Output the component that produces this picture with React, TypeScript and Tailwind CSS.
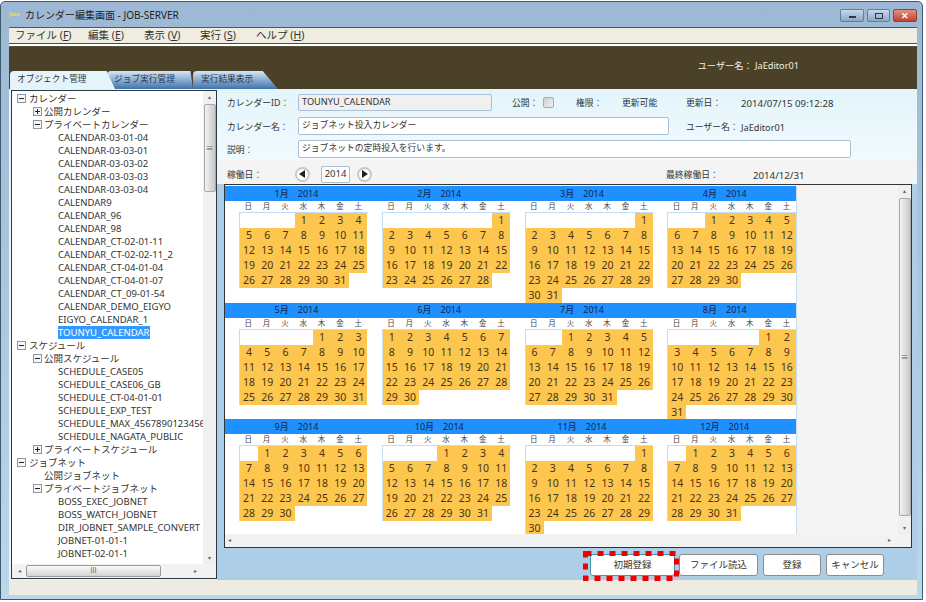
import { Fragment } from "react";

const FONT = "font-['Noto_Sans','Noto_Sans_CJK_JP',sans-serif]";

type TreeRow = { label: string; level: 0 | 1 | 2; toggle?: "+" | "-"; selected?: boolean };

const tree: TreeRow[] = [
  { label: "カレンダー", level: 0, toggle: "-" },
  { label: "公開カレンダー", level: 1, toggle: "+" },
  { label: "プライベートカレンダー", level: 1, toggle: "-" },
  { label: "CALENDAR-03-01-04", level: 2 },
  { label: "CALENDAR-03-03-01", level: 2 },
  { label: "CALENDAR-03-03-02", level: 2 },
  { label: "CALENDAR-03-03-03", level: 2 },
  { label: "CALENDAR-03-03-04", level: 2 },
  { label: "CALENDAR9", level: 2 },
  { label: "CALENDAR_96", level: 2 },
  { label: "CALENDAR_98", level: 2 },
  { label: "CALENDAR_CT-02-01-11", level: 2 },
  { label: "CALENDAR_CT-02-02-11_2", level: 2 },
  { label: "CALENDAR_CT-04-01-04", level: 2 },
  { label: "CALENDAR_CT-04-01-07", level: 2 },
  { label: "CALENDAR_CT_09-01-54", level: 2 },
  { label: "CALENDAR_DEMO_EIGYO", level: 2 },
  { label: "EIGYO_CALENDAR_1", level: 2 },
  { label: "TOUNYU_CALENDAR", level: 2, selected: true },
  { label: "スケジュール", level: 0, toggle: "-" },
  { label: "公開スケジュール", level: 1, toggle: "-" },
  { label: "SCHEDULE_CASE05", level: 2 },
  { label: "SCHEDULE_CASE06_GB", level: 2 },
  { label: "SCHEDULE_CT-04-01-01", level: 2 },
  { label: "SCHEDULE_EXP_TEST", level: 2 },
  { label: "SCHEDULE_MAX_456789012345678", level: 2 },
  { label: "SCHEDULE_NAGATA_PUBLIC", level: 2 },
  { label: "プライベートスケジュール", level: 1, toggle: "+" },
  { label: "ジョブネット", level: 0, toggle: "-" },
  { label: "公開ジョブネット", level: 1 },
  { label: "プライベートジョブネット", level: 1, toggle: "-" },
  { label: "BOSS_EXEC_JOBNET", level: 2 },
  { label: "BOSS_WATCH_JOBNET", level: 2 },
  { label: "DIR_JOBNET_SAMPLE_CONVERT", level: 2 },
  { label: "JOBNET-01-01-1", level: 2 },
  { label: "JOBNET-02-01-1", level: 2 },
];

const months = [
  { m: 1, blank: 3, days: 31 },
  { m: 2, blank: 6, days: 28 },
  { m: 3, blank: 6, days: 31 },
  { m: 4, blank: 2, days: 30 },
  { m: 5, blank: 4, days: 31 },
  { m: 6, blank: 0, days: 30 },
  { m: 7, blank: 2, days: 31 },
  { m: 8, blank: 5, days: 31 },
  { m: 9, blank: 1, days: 30 },
  { m: 10, blank: 3, days: 31 },
  { m: 11, blank: 6, days: 30 },
  { m: 12, blank: 1, days: 31 },
];

const weekdays = ["日", "月", "火", "水", "木", "金", "土"];

function Toggle({ type }: { type: "+" | "-" }) {
  return (
    <span className="relative block h-[9px] w-[9px] border border-[#8a98a6] bg-[#f4f6f8]">
      <span className="absolute top-[3px] left-[1px] h-px w-[5px] bg-[#222]" />
      {type === "+" && <span className="absolute top-[1px] left-[3px] h-[5px] w-px bg-[#222]" />}
    </span>
  );
}

function TreePanel() {
  return (
    <div className="flex h-[489px] w-[206px] flex-col border border-[#2b3a44] bg-white">
      <div className="flex min-h-0 flex-1">
        <div className="min-w-0 flex-1 overflow-hidden pt-[1px]">
          {tree.map((row) => (
            <div key={row.label} className="flex h-[13px] items-center whitespace-nowrap text-[9.5px] leading-[13px] text-[#333]">
              <span className={row.level === 0 ? "w-[5px] shrink-0" : row.level === 1 ? "w-[21px] shrink-0" : "w-[46px] shrink-0"} />
              {row.level < 2 && (
                <span className={row.level === 0 ? "w-[12px] shrink-0" : "w-[11px] shrink-0"}>
                  {row.toggle && <Toggle type={row.toggle} />}
                </span>
              )}
              <span className={row.selected ? "bg-[#3399ff] text-white" : ""}>{row.label}</span>
            </div>
          ))}
        </div>
        <VScroll thumbTop={13} thumbHeight={88} />
      </div>
      <div className="flex h-[14px] shrink-0 items-center bg-[#f2f2f2] text-[6px] text-[#666]">
        <span className="w-[14px] text-center">◂</span>
        <span className="flex h-[12px] w-[135px] items-center justify-center rounded-[2px] border border-[#9a9a9a] bg-gradient-to-b from-[#fafafa] to-[#d4d4d4] text-[7px]">
          Ⅲ
        </span>
        <span className="ml-auto w-[42px] text-center">▸</span>
      </div>
    </div>
  );
}

function VScroll({ thumbTop, thumbHeight }: { thumbTop: number; thumbHeight: number }) {
  return (
    <div className="flex w-[13px] shrink-0 flex-col items-center bg-[#f0f0f0] text-[6px] leading-none text-[#666]">
      <span className="flex h-[12px] items-center">▴</span>
      <div className="w-[12px] flex-1">
        <div
          className="flex items-center justify-center rounded-[2px] border border-[#a8a8a8] bg-gradient-to-r from-[#f4f4f4] to-[#c8c8c8] text-[8px]"
          style={{ marginTop: thumbTop - 12, height: thumbHeight }}
        >
          ≡
        </div>
      </div>
      <span className="flex h-[12px] items-center">▾</span>
    </div>
  );
}

function Month({ m, blank, days }: { m: number; blank: number; days: number }) {
  const nums = Array.from({ length: days }, (_, i) => i + 1);
  return (
    <div className="h-[116.5px] w-[143px] bg-white">
      <div className="flex h-[15px] items-center justify-center gap-[9px] bg-[#1e90ff] text-[9px] text-[#10264a]">
        <span>{m}月</span>
        <span>2014</span>
      </div>
      <div className="ml-[14px] w-[128.5px]">
        <div className="grid h-[11px] grid-cols-7 text-center text-[7.5px] leading-[11px] text-[#444]">
          {weekdays.map((d) => (
            <span key={d}>{d}</span>
          ))}
        </div>
        <div className="grid grid-cols-7 border-t border-l border-[#c4dcf6]">
          {Array.from({ length: blank }, (_, i) => (
            <span key={i} className="h-[15px] bg-white" />
          ))}
          {nums.map((n) => (
            <span key={n} className="h-[15px] bg-[#fcc64f] text-center text-[10.5px] leading-[15px] text-[#4a3414]">
              {n}
            </span>
          ))}
        </div>
      </div>
    </div>
  );
}

function FormLabel({ className, children }: { className: string; children: React.ReactNode }) {
  return <span className={`shrink-0 whitespace-nowrap pt-[4px] text-[#333] ${className}`}>{children}</span>;
}

function ActionButton({ className, children }: { className: string; children: React.ReactNode }) {
  return (
    <button className={`h-[22px] rounded-[3px] border bg-white text-[9.5px] text-[#333] ${className}`}>
      {children}
    </button>
  );
}

function WindowButton({ className, children }: { className: string; children: React.ReactNode }) {
  return (
    <span className={`flex h-[13px] items-center justify-center rounded-[2px] border border-[#5f7f9f] ${className}`}>
      {children}
    </span>
  );
}

function RoundArrow({ dir }: { dir: "left" | "right" }) {
  return (
    <span className="flex h-[15px] w-[15px] items-center justify-center rounded-full border-2 border-[#c8c8c8] bg-white">
      <svg width="7" height="8" viewBox="0 0 7 8">
        <path d={dir === "left" ? "M6 0v8L0 4z" : "M1 0v8l6-4z"} fill="#222" />
      </svg>
    </span>
  );
}

export default function App() {
  return (
    <div className={`h-[602px] w-[926px] overflow-hidden bg-white pt-[1px] ${FONT}`}>
      <div className="flex h-[599px] w-[923px] flex-col rounded-t-[5px] border border-[#3d5a6c] bg-gradient-to-b from-[#9db8d4] to-[#bcd6ea] pr-[5px] pb-[4px] pl-[8px]">
        {/* Title bar */}
        <div className="flex h-[25px] shrink-0 items-center pt-[1px] text-[10px] text-[#222]">
          <span className="w-[16px] text-[5px] font-bold text-[#f5e020]">Java</span>
          <span>カレンダー編集画面 - JOB-SERVER</span>
          <div className="mt-[1px] ml-auto flex gap-[3px]">
            <WindowButton className="w-[24px] bg-gradient-to-b from-[#c6d8ea] to-[#8aa8c6]">
              <span className="mt-[3px] h-[2px] w-[7px] border border-[#334] bg-white" />
            </WindowButton>
            <WindowButton className="w-[23px] bg-gradient-to-b from-[#c6d8ea] to-[#8aa8c6]">
              <span className="h-[6px] w-[8px] border border-[#334] bg-transparent" />
            </WindowButton>
            <WindowButton className="w-[24px] border-[#8d4436] bg-gradient-to-b from-[#e2907f] to-[#c0402c]">
              <span className="text-[9px] font-bold leading-none text-white">✕</span>
            </WindowButton>
          </div>
        </div>

        {/* Menu */}
        <div className="flex h-[16px] shrink-0 items-center border-t border-[#555] bg-[#efece2] text-[10.5px] text-[#333]">
          <span className="ml-[6px] w-[73px]">ファイル (<u>F</u>)</span>
          <span className="w-[56px]">編集 (<u>E</u>)</span>
          <span className="w-[56px]">表示 (<u>V</u>)</span>
          <span className="w-[56px]">実行 (<u>S</u>)</span>
          <span>ヘルプ (<u>H</u>)</span>
        </div>
        <div className="h-[4px] shrink-0 border-y border-[#55503a] bg-white" />

        {/* Brown header with tabs */}
        <div className="flex h-[42px] shrink-0 items-end justify-between bg-[#4a4128]">
          <div className="flex text-[8.7px] text-[#26384c]">
            <span className="relative z-10 ml-[1px] flex h-[18px] w-[105px] items-center rounded-tl-[4px] bg-[#e3f5fb] pl-[7px] text-[#333] [clip-path:polygon(0_0,92%_0,100%_100%,0_100%)]">
              オブジェクト管理
            </span>
            <span className="ml-[-8px] flex h-[18px] w-[86px] items-center rounded-tl-[4px] bg-gradient-to-b from-[#d9e6f2] to-[#3d73ad] pl-[7px] [clip-path:polygon(0_0,97%_0,100%_100%,0_100%)]">
              ジョブ実行管理
            </span>
            <span className="flex h-[18px] w-[85px] items-center rounded-tl-[4px] bg-gradient-to-b from-[#d9e6f2] to-[#3d73ad] pl-[8px] [clip-path:polygon(0_0,82%_0,100%_100%,0_100%)]">
              実行結果表示
            </span>
          </div>
          <span className="mr-[118px] mb-[16px] text-[9.2px] text-[#f2efe4]">ユーザー名： JaEditor01</span>
        </div>

        {/* Body */}
        <div className="flex min-h-0 flex-1 bg-[#aecde6]">
          <div className="w-[208px] shrink-0 bg-[#e8f4fa] pt-[1px] pl-[2px]">
            <TreePanel />
          </div>
          <div className="flex min-w-0 flex-1 flex-col text-[8.8px]">
            {/* Form */}
            <div className="h-[71px] shrink-0 bg-gradient-to-b from-[#e3f5fb] to-[#f1fafd] pt-[4px]">
              <div className="flex h-[18px] items-center pl-[10px]">
                <FormLabel className="w-[71px]">カレンダーID：</FormLabel>
                <span className="flex h-[17px] w-[194px] items-center rounded-[2px] border border-[#a9c0d6] bg-[#f0f0f0] pl-[3px] text-[9.2px] text-[#333]">
                  TOUNYU_CALENDAR
                </span>
                <FormLabel className="ml-[20px] w-[31px]">公開：</FormLabel>
                <span className="h-[11px] w-[11px] rounded-[2px] border border-[#aaa] bg-gradient-to-br from-[#cfcfcf] to-[#f0f0f0]" />
                <FormLabel className="ml-[22px] w-[46px]">権限：</FormLabel>
                <FormLabel className="w-[64px]">更新可能</FormLabel>
                <FormLabel className="w-[55px]">更新日：</FormLabel>
                <FormLabel className="text-[9.7px]">2014/07/15 09:12:28</FormLabel>
              </div>
              <div className="mt-[6px] flex h-[18px] items-center pl-[10px]">
                <FormLabel className="w-[71px]">カレンダー名：</FormLabel>
                <span className="flex h-[18px] w-[371px] items-center rounded-[2px] border border-[#a9c0d6] bg-white pl-[3px] text-[#333]">
                  ジョブネット投入カレンダー
                </span>
                <FormLabel className="ml-[17px] w-[55px]">ユーザー名：</FormLabel>
                <FormLabel className="text-[9.2px]">JaEditor01</FormLabel>
              </div>
              <div className="mt-[5px] flex h-[18px] items-center pl-[10px]">
                <FormLabel className="w-[71px]">説明：</FormLabel>
                <span className="flex h-[18px] w-[553px] items-center rounded-[2px] border border-[#a9c0d6] bg-white pl-[3px] text-[#333]">
                  ジョブネットの定時投入を行います。
                </span>
              </div>
            </div>

            {/* Working-day year bar */}
            <div className="flex h-[24px] shrink-0 items-center bg-[#f4f4f4] pt-[4px] pl-[10px]">
              <FormLabel className="w-[68px]">稼働日：</FormLabel>
              <RoundArrow dir="left" />
              <span className="ml-[11px] flex h-[17px] w-[29px] items-center justify-center rounded-[2px] border border-[#a9c0d6] bg-white text-[9.5px] text-[#333]">2014</span>
              <span className="ml-[7px]"><RoundArrow dir="right" /></span>
              <FormLabel className="ml-[294px] w-[87px]">最終稼働日：</FormLabel>
              <FormLabel className="text-[9.7px]">2014/12/31</FormLabel>
            </div>

            {/* Calendar box */}
            <div className="ml-[7px] flex h-[364px] w-[688px] shrink-0 flex-col border border-[#333] bg-[#f4f4f4]">
              <div className="flex min-h-0 flex-1">
                <div className="min-w-0 flex-1 overflow-hidden">
                  <div className="mt-[1px] grid w-[572px] grid-cols-4 border-r border-[#c4dcf6]">
                    {months.map((mo) => (
                      <Fragment key={mo.m}>
                        <Month {...mo} />
                      </Fragment>
                    ))}
                  </div>
                </div>
                <VScroll thumbTop={13} thumbHeight={318} />
              </div>
              <div className="flex h-[13px] shrink-0 items-center justify-between bg-[#f2f2f2] pr-[20px] pl-[3px] text-[6px] text-[#666]">
                <span>◂</span>
                <span>▸</span>
              </div>
            </div>

            {/* Buttons */}
            <div className="flex flex-1 items-start pt-[6px] pl-[373px]">
              <div className="relative">
                <ActionButton className="w-[85px] border-[#3a9ab0]">初期登録</ActionButton>
                <svg className="absolute -top-[3px] -left-[7px]" width="96" height="30" viewBox="0 0 96 30" fill="none">
                  <rect x="2.5" y="2.5" width="91" height="25" stroke="#ee0000" strokeWidth="5" strokeDasharray="6 6" />
                </svg>
              </div>
              <ActionButton className="ml-[4px] w-[79px] border-[#8c8c8c]">ファイル読込</ActionButton>
              <ActionButton className="ml-[5px] w-[58px] border-[#8c8c8c]">登録</ActionButton>
              <ActionButton className="ml-[5px] w-[58px] border-[#8c8c8c]">キャンセル</ActionButton>
            </div>
          </div>
        </div>

        {/* Status bar */}
        <div className="h-[15px] shrink-0 bg-[#eeece2]" />
      </div>
    </div>
  );
}
